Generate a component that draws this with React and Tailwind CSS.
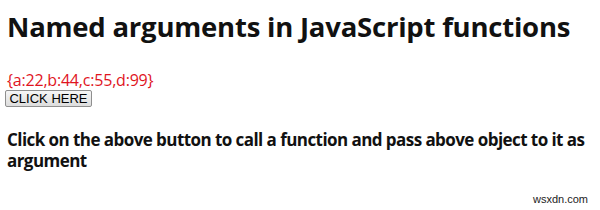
export default function App() {
  return (
    <div className="relative w-[600px] h-[210px] bg-white overflow-hidden px-[7px]" style={{ fontFamily: '"Open Sans", "Noto Sans", sans-serif' }}>
      <h1 className="pt-[9px] text-[27.5px] leading-[36px] font-bold text-[#111] tracking-[-0.22px]">Named arguments in JavaScript functions</h1>
      <div className="mt-[25px] text-[16px] leading-[20px] text-[#e0141e] tracking-[-0.2px]">{"{a:22,b:44,c:55,d:99}"}</div>
      <button className="block ml-[-2px] w-[87px] h-[17px] border border-[#8f8f8f] rounded-[2px] bg-gradient-to-b from-[#f6f6f6] to-[#dddddd] text-[13px] leading-[15px] text-black" style={{ fontFamily: '"Liberation Sans", Arial, sans-serif' }}>CLICK HERE</button>
      <p className="mt-[22px] text-[17px] leading-[21px] font-bold text-[#111] tracking-[-0.56px]">Click on the above button to call a function and pass above object to it as argument</p>
      <div className="absolute right-[12px] bottom-[5px] text-[11px] leading-[12px] text-[#222]" style={{ fontFamily: '"Liberation Sans", Arial, sans-serif' }}>wsxdn.com</div>
    </div>
  );
}
